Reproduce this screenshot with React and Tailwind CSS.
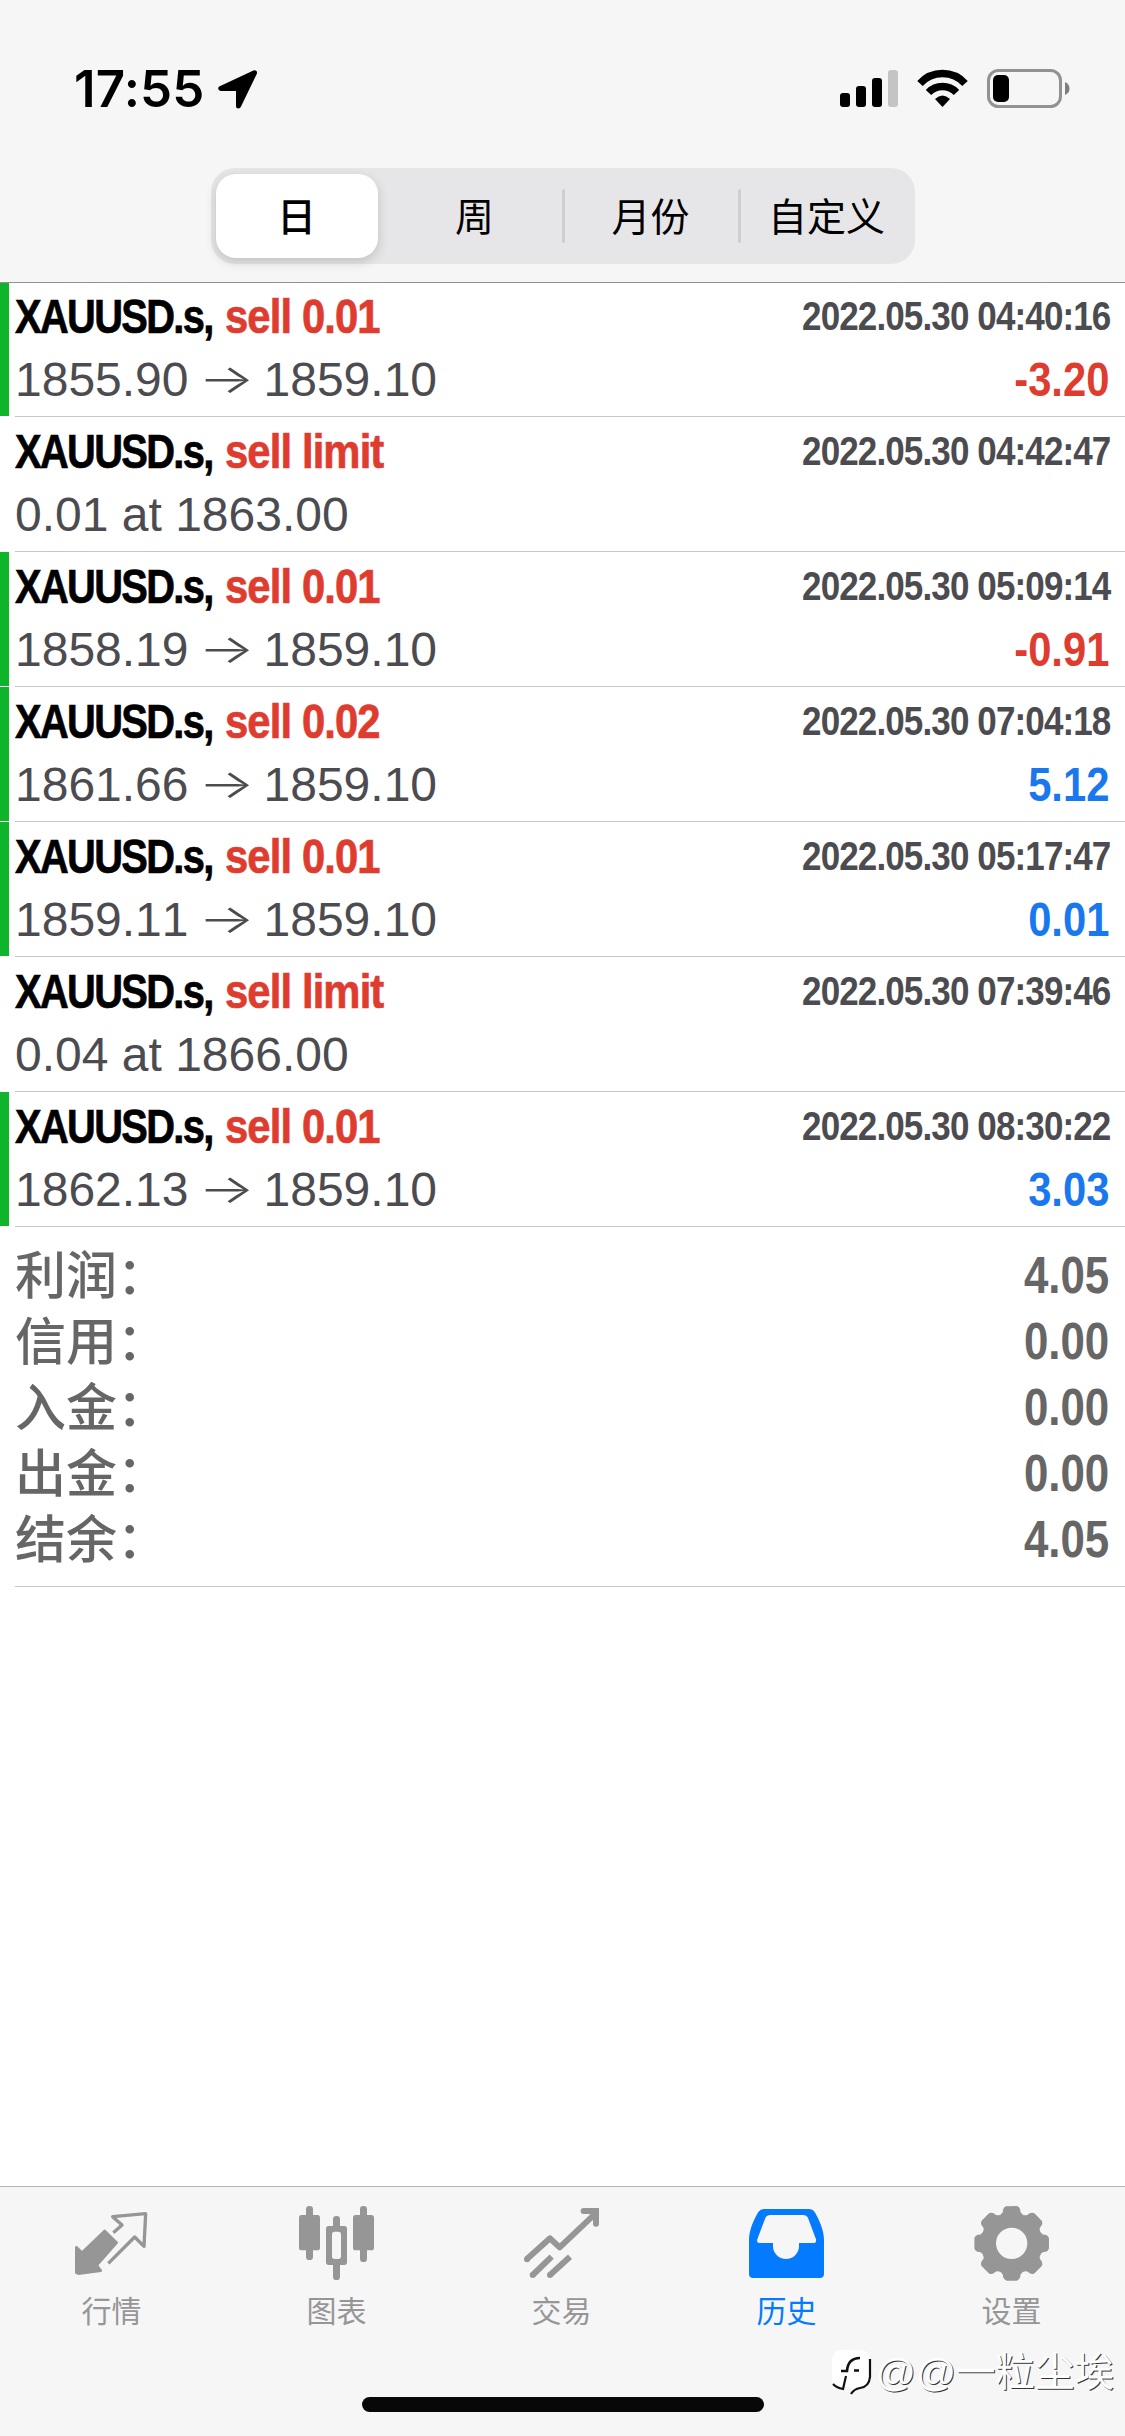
import React, { useState } from "react";
import clsx from "clsx";

const deals = [
  { id: 1, type: "sell 0.01", open: "1855.90", close: "1859.10", time: "2022.05.30 04:40:16", profit: "-3.20" },
  { id: 2, type: "sell limit", order: "0.01 at 1863.00", time: "2022.05.30 04:42:47" },
  { id: 3, type: "sell 0.01", open: "1858.19", close: "1859.10", time: "2022.05.30 05:09:14", profit: "-0.91" },
  { id: 4, type: "sell 0.02", open: "1861.66", close: "1859.10", time: "2022.05.30 07:04:18", profit: "5.12" },
  { id: 5, type: "sell 0.01", open: "1859.11", close: "1859.10", time: "2022.05.30 05:17:47", profit: "0.01" },
  { id: 6, type: "sell limit", order: "0.04 at 1866.00", time: "2022.05.30 07:39:46" },
  { id: 7, type: "sell 0.01", open: "1862.13", close: "1859.10", time: "2022.05.30 08:30:22", profit: "3.03" },
];

const totals = [
  { label: "利润：", value: "4.05" },
  { label: "信用：", value: "0.00" },
  { label: "入金：", value: "0.00" },
  { label: "出金：", value: "0.00" },
  { label: "结余：", value: "4.05" },
];

const periods = ["日", "周", "月份", "自定义"];

function StatusBar() {
  return (
    <div className="flex h-[168px] items-start justify-between pl-[74px] pr-[55px] pt-[59px] text-black">
      <div className="flex items-center">
        <span className="w-[144px] font-['Inter','Liberation_Sans',sans-serif] text-[51px] font-semibold leading-[60px] tracking-[0.2px]">
          17:55
        </span>
        <svg width="39" height="39" viewBox="0 0 39 39" fill="currentColor">
          <path
            d="M36.5 2.8 2.8 18.5H20.5V36Z"
            stroke="currentColor"
            strokeWidth="5"
            strokeLinejoin="round"
          />
        </svg>
      </div>
      <div className="flex items-center pt-[10px]">
        <svg className="mr-[19px]" width="58" height="39" viewBox="0 0 58 39">
          <rect x="0" y="24" width="10" height="14" rx="3" />
          <rect x="16" y="17" width="10" height="21" rx="3" />
          <rect x="32" y="9" width="10" height="29" rx="3" />
          <rect x="48" y="1" width="10" height="37" rx="3" fill="#c4c4c4" />
        </svg>
        <svg className="mr-[19px]" width="51" height="39" viewBox="0 -1 51 39" fill="none" stroke="#000">
          <path d="M3 13.5A30.5 30.5 0 0 1 48 13.5" strokeWidth="7.5" />
          <path d="M11.5 22.5A19.5 19.5 0 0 1 39.500 22.500" strokeWidth="7.5" />
          <path d="M18 29Q25.500 22 33 29L25.500 37Z" fill="#000" stroke="none" />
        </svg>
        <svg width="83" height="39" viewBox="0 0 83 39">
          <rect x="1.500" y="1.500" width="72" height="36" rx="10" fill="none" stroke="#929292" strokeWidth="3" />
          <rect x="6" y="6" width="16" height="27" rx="5" />
          <path d="M78 13Q82.500 15 82.500 19.500T78 26Z" fill="#7e7e7e" />
        </svg>
      </div>
    </div>
  );
}

function PeriodPicker() {
  const [active, setActive] = useState(0);

  return (
    <div className="mx-auto flex h-[96px] w-[704px] rounded-[24px] bg-[#e6e6e8] font-['Noto_Sans_CJK_SC',sans-serif] text-[39px] leading-[60px] text-black">
      {periods.map((period, index) => (
        <button
          key={period}
          onClick={() => setActive(index)}
          className="relative flex flex-1 items-center justify-center"
        >
          <span
            className={clsx(
              "flex items-center justify-center pb-[4px]",
              index === active &&
                "mr-[4px] h-[84px] w-[162px] rounded-[20px] bg-white font-medium shadow-[0_4px_12px_rgba(0,0,0,0.16)]"
            )}
          >
            {period}
          </span>
          {index > active + 1 && (
            <span className="absolute left-[-1px] top-[21px] h-[54px] w-[3px] rounded bg-[#cfcfd2]" />
          )}
        </button>
      ))}
    </div>
  );
}

function DealRow({ deal }) {
  return (
    <li className="flex h-[135px] font-['Liberation_Sans',sans-serif] first:h-[134px]">
      <div className={clsx("mb-px w-[9px]", deal.profit && "bg-[#0eb52b]")} />
      <div className="ml-[6px] flex flex-1 flex-col justify-end border-b border-[#c6c6c8] pb-[5px] pr-[16px]">
        <div className="flex h-[63px] justify-between whitespace-nowrap font-bold">
          <p className="flex text-[48px] leading-[63px] [-webkit-text-stroke:0.7px_currentColor]">
            <span className="w-[210px] origin-left scale-x-[0.83] tracking-[-2px] text-black">XAUUSD.s,</span>
            <span className="origin-left scale-x-[0.87] tracking-[-1px] text-[#df3c30]">{deal.type}</span>
          </p>
          <p className="mr-[-1px] origin-right scale-x-[0.875] text-[40px] leading-[62px] tracking-[-1px] text-[#4c4c50]">
            {deal.time}
          </p>
        </div>
        <div className="flex h-[63px] justify-between whitespace-nowrap leading-[63px]">
          <p className="flex text-[48px] text-[#4c4c50] [font-kerning:none]">
            {deal.order || (
              <>
                {deal.open}
                <span className="w-[75px] scale-x-[1.35] scale-y-[0.9] text-center font-['Inter',sans-serif] text-[44px] font-light">
                  →
                </span>
                {deal.close}
              </>
            )}
          </p>
          {deal.profit && (
            <p
              className={clsx(
                "origin-right scale-x-[0.87] text-[48px] font-bold",
                deal.profit.startsWith("-") ? "text-[#df3c30]" : "text-[#1a78ee]"
              )}
            >
              {deal.profit}
            </p>
          )}
        </div>
      </div>
    </li>
  );
}

function Totals() {
  return (
    <div className="ml-[15px] h-[360px] border-b border-[#c6c6c8] pr-[16px] pt-[15px] text-[#666]">
      {totals.map((item) => (
        <div key={item.label} className="flex h-[66px] justify-between">
          <span className="font-['Noto_Sans_CJK_SC',sans-serif] text-[51px] font-medium leading-[60px]">
            {item.label}
          </span>
          <span className="origin-right scale-x-[0.86] font-['Liberation_Sans',sans-serif] text-[51px] font-bold leading-[67px]">
            {item.value}
          </span>
        </div>
      ))}
    </div>
  );
}

function QuotesIcon() {
  return (
    <>
      <path
        d="M4 124 21 140 89 75 125 110 65 178 77 194 10 203 4 200Z"
        fill="currentColor"
        stroke="currentColor"
        strokeWidth="8"
        strokeLinejoin="round"
      />
      <path
        d="M115 80 141 57 113 32 212 23 207 121 179 93 100 172"
        fill="none"
        stroke="currentColor"
        strokeWidth="10"
        strokeLinejoin="round"
      />
    </>
  );
}

function ChartIcon() {
  return (
    <g fill="currentColor">
      <rect x="18" y="0" width="21" height="162" rx="10" />
      <rect x="-3" y="27" width="63" height="106" rx="8" />
      <rect x="99" y="30" width="21" height="192" rx="10" />
      <rect x="78" y="60" width="63" height="117" rx="8" />
      <rect x="96" y="77" width="27" height="82" rx="8" fill="#f6f6f6" />
      <rect x="180" y="0" width="21" height="168" rx="10" />
      <rect x="159" y="27" width="63" height="106" rx="8" />
    </g>
  );
}

function TradeIcon() {
  return (
    <>
      <g fill="none" stroke="currentColor" strokeWidth="18">
        <path d="M5 160 75 97 104 124 214 20" strokeLinejoin="round" />
        <path d="M176 15H213V53" strokeLinecap="round" />
        <path d="M23 207 80 152M75 207 135 152" />
      </g>
      <g fill="currentColor">
        <circle cx="6" cy="160" r="9" />
        <circle cx="23" cy="207" r="9" />
        <circle cx="75" cy="207" r="9" />
      </g>
    </>
  );
}

function HistoryIcon() {
  return (
    <path
      fill="currentColor"
      fillRule="evenodd"
      d="M-3 102C-3 70 14 36 25 18Q31 9 43 9H176Q188 9 194 18C206 38 222 72 222 102V203Q222 216 209 216H10Q-3 216-3 203ZM61 27Q50 27 46 36L22 100Q19 111 28 111H69V120A39 39 0 0 0 147 120V111H190Q200 111 198 100L174 36Q170 27 159 27Z"
    />
  );
}

// Walks around the gear, one tooth every 45 degrees
function gearPath() {
  const at = (radius, degrees) => {
    const angle = ((degrees - 90) * Math.PI) / 180;
    return `${(110 + radius * Math.cos(angle)).toFixed(1)} ${(112 + radius * Math.sin(angle)).toFixed(1)}`;
  };
  let d = `M${at(112, -8)}`;
  for (let t = 0; t < 360; t += 45) {
    d += `L${at(113, t + 8)}Q${at(112, t + 12)} ${at(105, t + 14)}L${at(97, t + 16)}`;
    d += `Q${at(88, t + 22.5)} ${at(97, t + 29)}L${at(105, t + 31)}Q${at(112, t + 33)} ${at(113, t + 37)}`;
  }
  return d + "ZM157 112A47 47 0 1 0 63 112A47 47 0 1 0 157 112Z";
}

function SettingsIcon() {
  return <path d={gearPath()} fill="currentColor" fillRule="evenodd" />;
}

const tabs = [
  { name: "行情", icon: <QuotesIcon /> },
  { name: "图表", icon: <ChartIcon /> },
  { name: "交易", icon: <TradeIcon /> },
  { name: "历史", icon: <HistoryIcon /> },
  { name: "设置", icon: <SettingsIcon /> },
];

function TabBar() {
  const [current, setCurrent] = useState("历史");

  return (
    <nav className="relative flex h-[250px] flex-col items-center justify-between border-t border-[#b2b2b3] bg-[#f6f6f6] pb-[24px]">
      <div className="flex w-full pt-[19px]">
        {tabs.map((tab) => (
          <button
            key={tab.name}
            onClick={() => setCurrent(tab.name)}
            className={clsx(
              "flex flex-1 flex-col items-center",
              tab.name === current ? "text-[#047aff]" : "text-[#969696]"
            )}
          >
            <svg className="overflow-visible" width="75" height="75" viewBox="0 0 225 225">
              {tab.icon}
            </svg>
            <span className="mt-[6px] pr-[2px] font-['Noto_Sans_CJK_SC',sans-serif] text-[30px] leading-[44px]">
              {tab.name}
            </span>
          </button>
        ))}
      </div>
      <div className="h-[15px] w-[402px] rounded-full bg-[#080808]" />
      <Watermark />
    </nav>
  );
}

function Watermark() {
  return (
    <div className="absolute bottom-[36px] right-[11px] flex items-center whitespace-nowrap text-white">
      <svg className="mr-[6px] overflow-visible" width="38" height="45" viewBox="0 0 38 45">
        <path d="M11 0H27Q38 0 38 11V27Q38 37 28 38L19 45L20 38 13 36 11 39Q0 38 0 28V11Q0 0 11 0Z" fill="#fff" />
        <g fill="none" stroke="#111" strokeWidth="2.2">
          <path d="M38 9V27Q37 37 28 38Q22 39 19 44" />
          <path d="M1 34Q5 38 11 39L14 26" />
          <path d="M9 21H15Q16 8 28 8M22 20.500H27" strokeWidth="2.600" />
        </g>
      </svg>
      <span className="font-['Liberation_Sans','Noto_Sans_CJK_SC',sans-serif] text-[39.5px] leading-[56px] [text-shadow:1px_1px_0_#333]">
        @@一粒尘埃
      </span>
    </div>
  );
}

function App() {
  return (
    <div className="flex h-[2436px] w-[1125px] flex-col overflow-hidden bg-white">
      <header className="h-[283px] border-b border-[#8f8f91] bg-[#f6f6f6]">
        <StatusBar />
        <PeriodPicker />
      </header>
      <main className="flex-1">
        <ul>
          {deals.map((deal) => (
            <DealRow key={deal.id} deal={deal} />
          ))}
        </ul>
        <Totals />
      </main>
      <TabBar />
    </div>
  );
}

export default App;
